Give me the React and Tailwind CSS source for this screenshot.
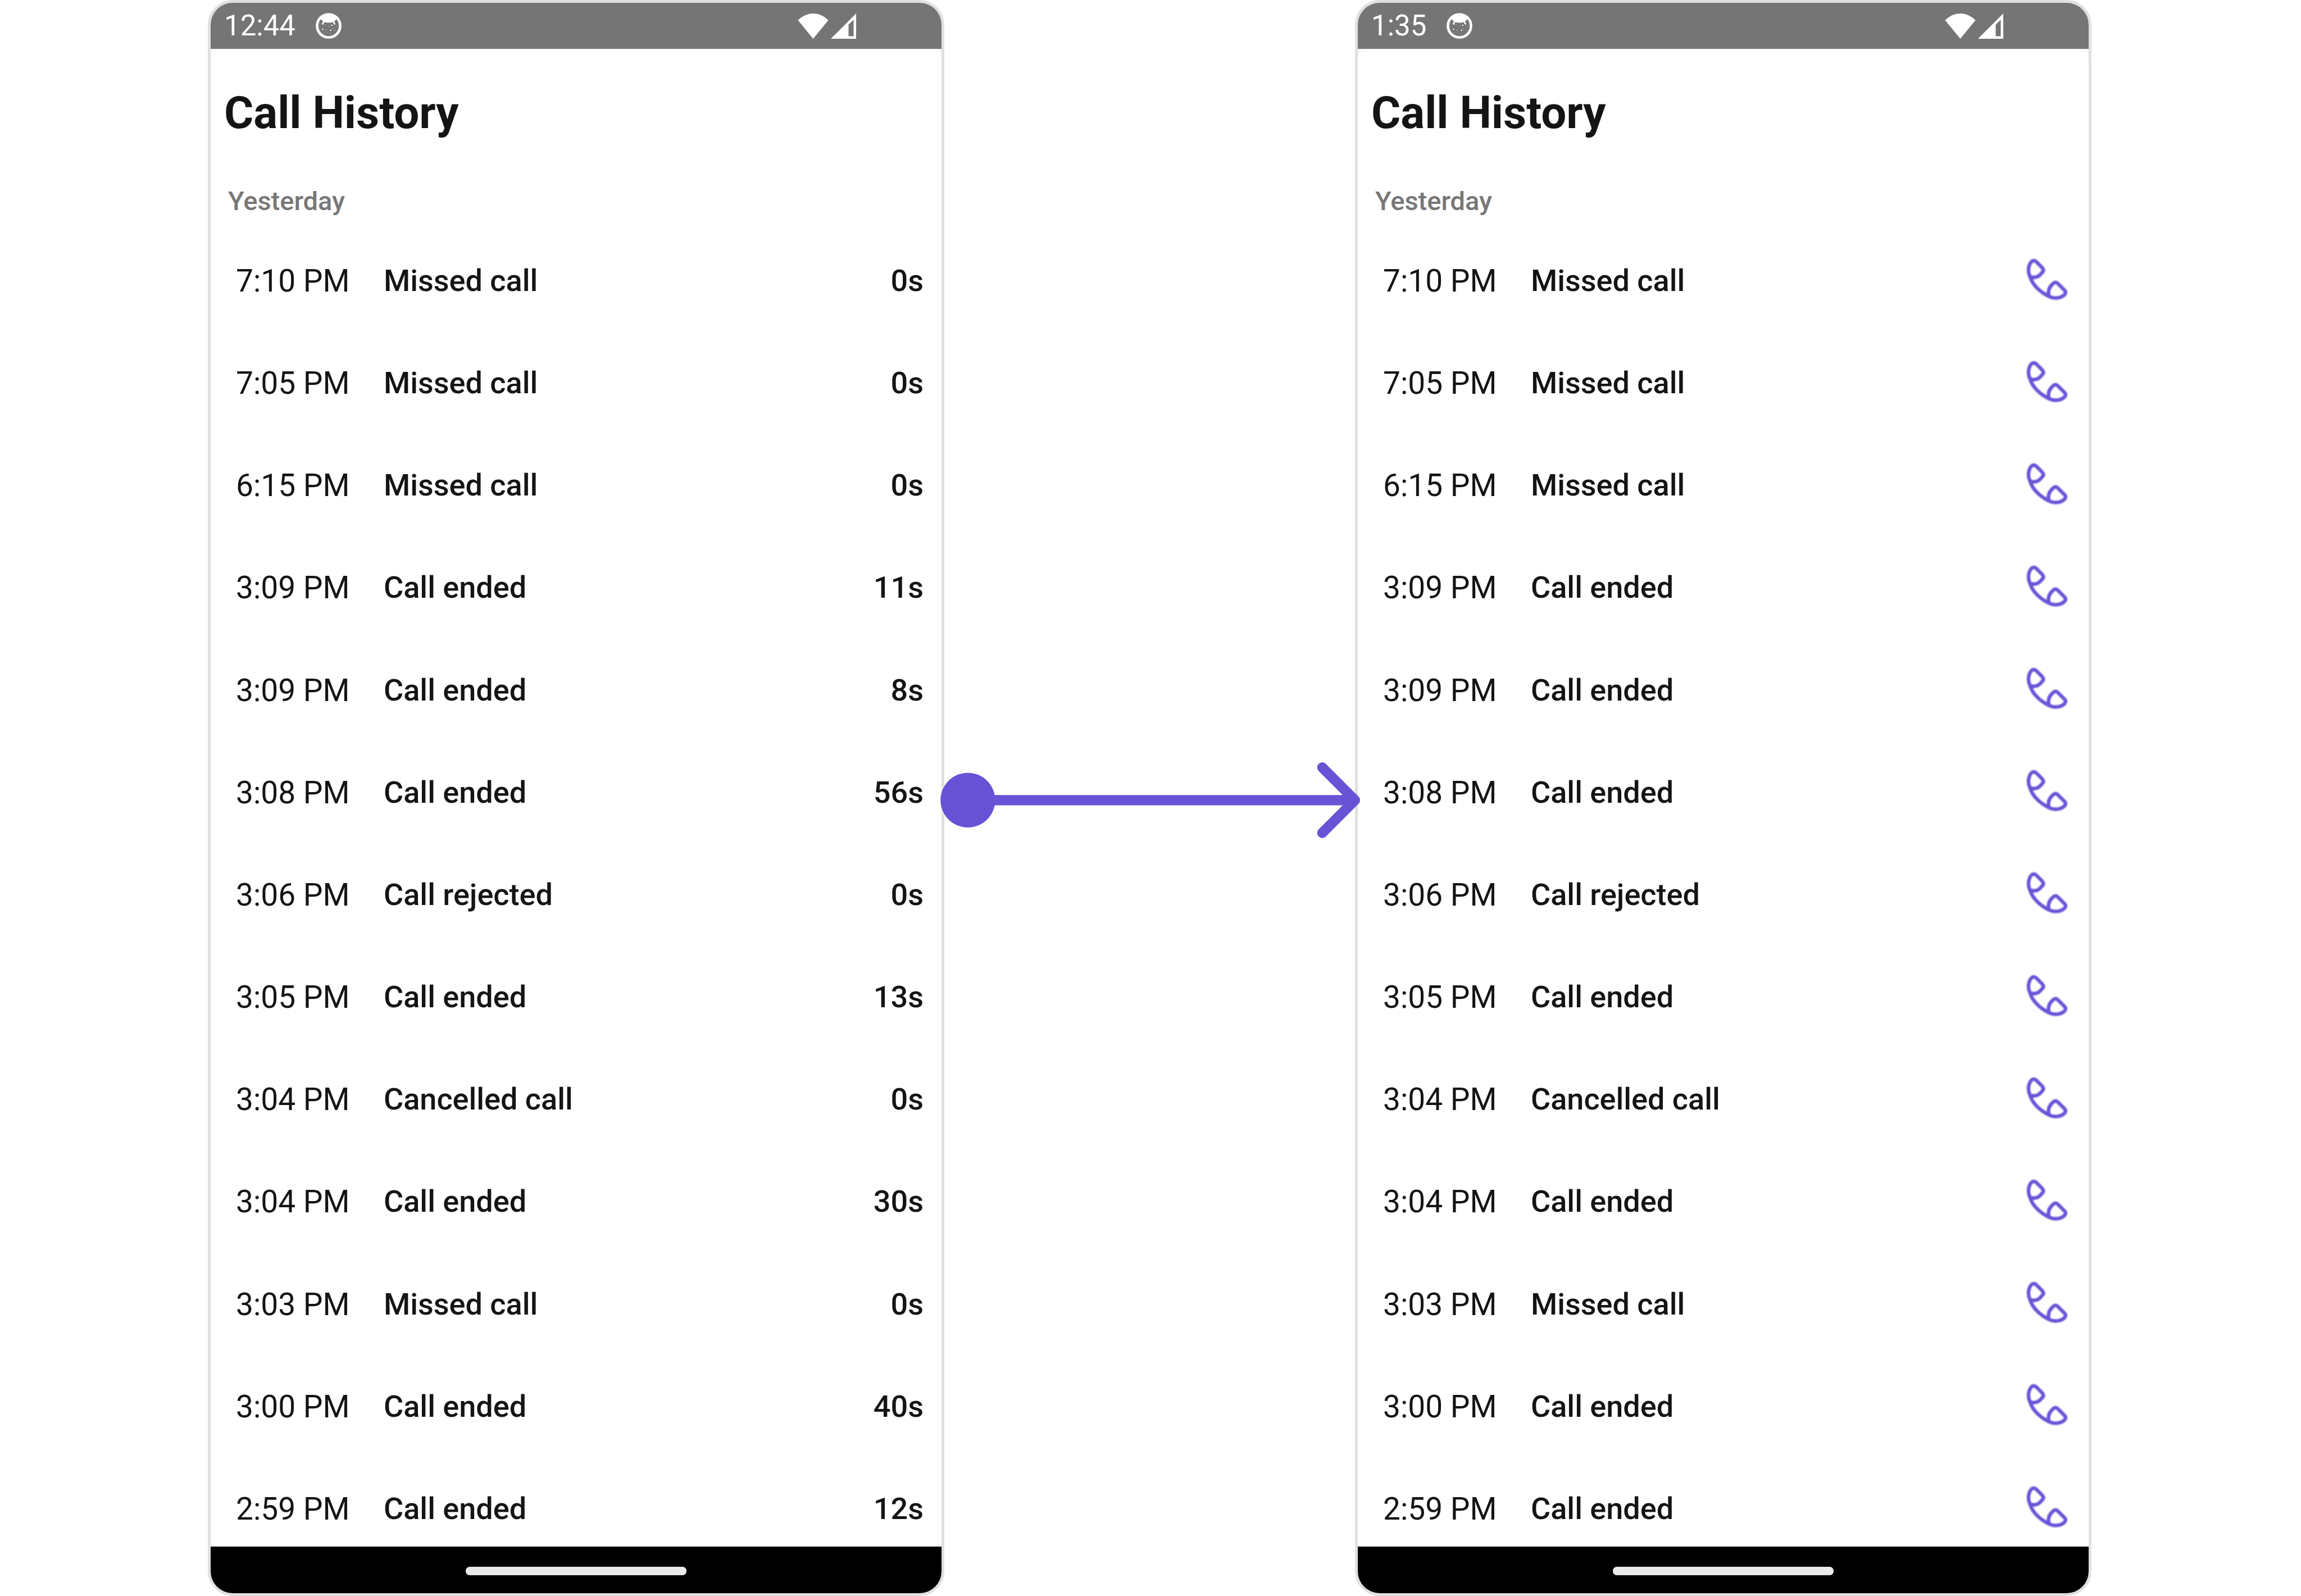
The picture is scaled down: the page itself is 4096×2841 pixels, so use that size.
const calls = [
  { time: "7:10 PM", label: "Missed call", duration: "0s" },
  { time: "7:05 PM", label: "Missed call", duration: "0s" },
  { time: "6:15 PM", label: "Missed call", duration: "0s" },
  { time: "3:09 PM", label: "Call ended", duration: "11s" },
  { time: "3:09 PM", label: "Call ended", duration: "8s" },
  { time: "3:08 PM", label: "Call ended", duration: "56s" },
  { time: "3:06 PM", label: "Call rejected", duration: "0s" },
  { time: "3:05 PM", label: "Call ended", duration: "13s" },
  { time: "3:04 PM", label: "Cancelled call", duration: "0s" },
  { time: "3:04 PM", label: "Call ended", duration: "30s" },
  { time: "3:03 PM", label: "Missed call", duration: "0s" },
  { time: "3:00 PM", label: "Call ended", duration: "40s" },
  { time: "2:59 PM", label: "Call ended", duration: "12s" },
];

function FaceIcon() {
  return (
    <svg className="size-[46px]" viewBox="0 0 150 150" aria-hidden="true">
      <circle cx="75" cy="75" r="67" fill="none" stroke="white" strokeWidth="15" />
      <path d="M18 48 L30 36 Q37 47 47 52 Q75 62 103 52 Q113 47 120 36 L132 48 Q114 6 75 6 Q36 6 18 48Z" fill="white" />
      <path d="M47 51 L40 64 M103 51 L110 64" stroke="white" strokeWidth="9" strokeLinecap="round" />
      <g fill="white">
        <path d="M38 91h7v7h-7zM83 97h7v7h-7zM90 68h7v7h-7z" />
        <path d="M23 60h3v3h-3zM53 67h4v4h-4zM23 83h3v3h-3zM75 75h3v3h-3zM60 98h4v4h-4zM98 90h3v3h-3zM120 75h3v3h-3zM112 98h3v3h-3zM67 113h3v3h-3zM46 113h3v3h-3zM83 120h3v3h-3z" />
      </g>
    </svg>
  );
}

function WifiIcon() {
  return (
    <svg className="h-[45px] w-[55px]" viewBox="0 0 180 150" aria-hidden="true">
      <path d="M0 40 Q40 0 90 0 Q140 0 180 40 L90 150Z" fill="white" />
    </svg>
  );
}

function SignalIcon() {
  return (
    <svg className="size-[45px]" viewBox="0 0 150 150" aria-hidden="true">
      <path fillRule="evenodd" d="M0 150 L150 0 V150Z M105 66 V135 H135 V37Z" fill="white" />
    </svg>
  );
}

function PhoneIcon() {
  return (
    <svg className="size-[73px] overflow-visible blur-[1px]" viewBox="185 138 238 240" aria-hidden="true">
      <path
        d="M206 242 C188 205 200 167 216 152 Q228 143 241 153 L277 189 Q290 204 279 215 L261 234 Q240 252 206 242 C220 290 265 332 318 358 C352 374 390 366 409 346 Q419 334 409 322 L371 284 Q357 269 343 280 C314 304 308 330 318 358"
        fill="none"
        stroke="#6b54d7"
        strokeWidth="21"
        strokeLinejoin="round"
      />
    </svg>
  );
}

function Phone({ clock, withButtons }) {
  return (
    <section className="flex flex-col overflow-hidden rounded-[44px] border-5 border-[#e0e0e0] bg-[#fafafa]">
      <header className="flex h-[82px] items-center bg-[#757575] pr-[152px] pl-6 text-[51px] leading-[60px] text-white">
        <span>{clock}</span>
        <span className="ml-[36px] flex-1">
          <FaceIcon />
        </span>
        <span className="flex items-center gap-1">
          <WifiIcon />
          <SignalIcon />
        </span>
      </header>
      <main className="flex flex-1 flex-col rounded-t-[20px] bg-white pt-[66px] pb-[31px] text-[#141414]">
        <h1 className="px-6 text-[80px] leading-[96px] font-bold">Call History</h1>
        <h2 className="mt-[81px] px-[31px] text-[47px] leading-[56px] font-medium text-[#777777]">Yesterday</h2>
        <ul className="mt-[78px] flex flex-1 flex-col justify-between pr-8 pl-[45px] text-[54px] leading-[72px]">
          {calls.map((call, i) => (
            <li key={i} className="flex h-[72px] items-center">
              <span className="w-[263px] text-[55px] leading-[72px]">{call.time}</span>
              <span className="flex-1 font-medium">{call.label}</span>
              {withButtons ? (
                <button type="button" className="pr-1.5 pb-1.5" aria-label={`Call back, ${call.label} ${call.time}`}>
                  <PhoneIcon />
                </button>
              ) : (
                <span className="font-medium">{call.duration}</span>
              )}
            </li>
          ))}
        </ul>
      </main>
      <footer className="flex h-[83px] items-center justify-center bg-black pt-1">
        <span className="h-[15px] w-[393px] rounded-[7px] bg-[#eaeaea]" />
      </footer>
    </section>
  );
}

function Arrow() {
  return (
    <div className="z-10 mt-2 mr-[-10px] ml-[-7px] self-center">
      <svg className="block w-full" viewBox="1838 1490 822 148" aria-hidden="true">
        <circle cx="1891.7" cy="1564" r="53.5" fill="#6852d6" />
        <path
          d="M1892 1564 H2649 M2585 1500 L2649 1564 L2585 1628"
          fill="none"
          stroke="#6852d6"
          strokeWidth="20"
          strokeLinecap="round"
          strokeLinejoin="round"
        />
      </svg>
    </div>
  );
}

export default function App() {
  return (
    <div className="grid min-h-screen grid-cols-[370fr_1311fr_731fr_1311fr_373fr] bg-white font-['Roboto',sans-serif]">
      <div />
      <Phone clock="12:44" />
      <Arrow />
      <Phone clock="1:35" withButtons />
      <div />
    </div>
  );
}
